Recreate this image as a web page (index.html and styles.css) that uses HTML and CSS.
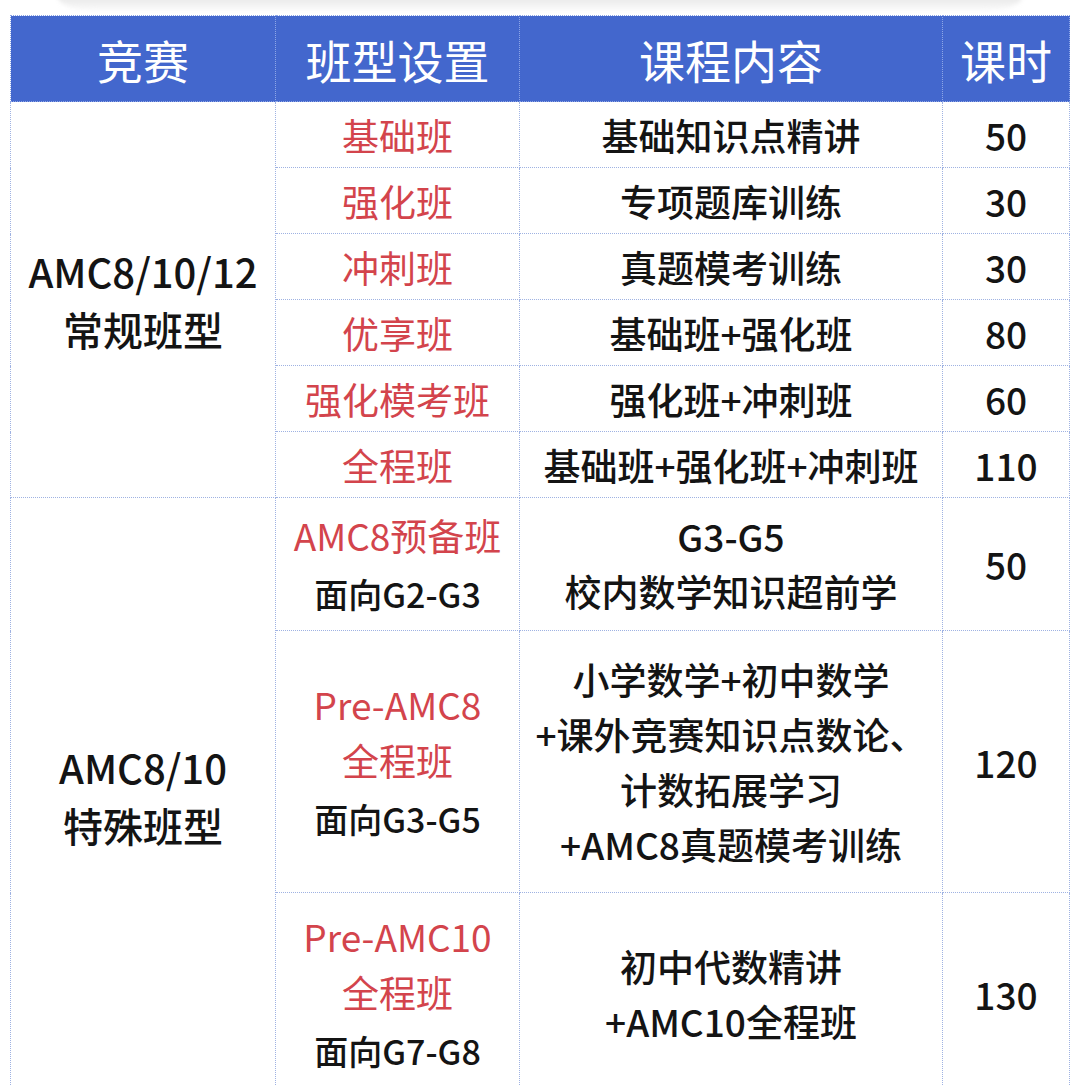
FILE: index.html
```html
<!DOCTYPE html>
<html lang="zh-CN">
<head>
<meta charset="utf-8">
<title>AMC 课程设置</title>
<link rel="stylesheet" href="styles.css">
</head>
<body>
<div class="top-shade"></div>
<table class="course-table">
  <colgroup>
    <col class="c1"><col class="c2"><col class="c3"><col class="c4">
  </colgroup>
  <thead>
    <tr class="head-row">
      <th>竞赛</th>
      <th>班型设置</th>
      <th>课程内容</th>
      <th>课时</th>
    </tr>
  </thead>
  <tbody>
    <tr class="std-row">
      <td rowspan="6" class="comp"><div class="comp-text">AMC8/10/12<br>常规班型</div></td>
      <td class="type"><span class="red">基础班</span></td>
      <td class="content">基础知识点精讲</td>
      <td class="hours">50</td>
    </tr>
    <tr class="std-row">
      <td class="type"><span class="red">强化班</span></td>
      <td class="content">专项题库训练</td>
      <td class="hours">30</td>
    </tr>
    <tr class="std-row">
      <td class="type"><span class="red">冲刺班</span></td>
      <td class="content">真题模考训练</td>
      <td class="hours">30</td>
    </tr>
    <tr class="std-row">
      <td class="type"><span class="red">优享班</span></td>
      <td class="content">基础班+强化班</td>
      <td class="hours">80</td>
    </tr>
    <tr class="std-row">
      <td class="type"><span class="red">强化模考班</span></td>
      <td class="content">强化班+冲刺班</td>
      <td class="hours">60</td>
    </tr>
    <tr class="std-row">
      <td class="type"><span class="red">全程班</span></td>
      <td class="content">基础班+强化班+冲刺班</td>
      <td class="hours">110</td>
    </tr>
    <tr class="row-prep">
      <td rowspan="3" class="comp"><div class="comp-text">AMC8/10<br>特殊班型</div></td>
      <td class="type multi">
        <div class="red">AMC8预备班</div>
        <div class="sub">面向G2-G3</div>
      </td>
      <td class="content multi">G3-G5<br>校内数学知识超前学</td>
      <td class="hours">50</td>
    </tr>
    <tr class="row-pre8">
      <td class="type multi">
        <div class="red">Pre-AMC8<br>全程班</div>
        <div class="sub">面向G3-G5</div>
      </td>
      <td class="content multi">小学数学+初中数学<br>+课外竞赛知识点数论、<br>计数拓展学习<br>+AMC8真题模考训练</td>
      <td class="hours">120</td>
    </tr>
    <tr class="row-pre10">
      <td class="type multi">
        <div class="red">Pre-AMC10<br>全程班</div>
        <div class="sub">面向G7-G8</div>
      </td>
      <td class="content multi">初中代数精讲<br>+AMC10全程班</td>
      <td class="hours">130</td>
    </tr>
  </tbody>
</table>
</body>
</html>
```

FILE: styles.css
```css
html, body {
  margin: 0;
  padding: 0;
  background: #ffffff;
}

body {
  font-family: "Noto Sans CJK SC", "Noto Sans", sans-serif;
  color: #141414;
  height: 1085px;
  overflow: hidden;
}

.top-shade {
  height: 15px;
  margin: -4px 58px 0 58px;
  border-radius: 0 0 40px 40px / 0 0 14px 14px;
  background: linear-gradient(to bottom, #e6e6e6 0%, #f1f1f1 50%, #fcfcfc 100%);
  filter: blur(2px);
}

.course-table {
  margin: 4px 0 0 10px;
  width: 1059px;
  table-layout: fixed;
  border-collapse: collapse;
  font-weight: 500;
}

.c1 { width: 265px; }
.c2 { width: 244px; }
.c3 { width: 423px; }
.c4 { width: 127px; }

.course-table th,
.course-table td {
  border: 1px dotted #9fb2e2;
  padding: 0;
  text-align: center;
  vertical-align: middle;
}

.head-row th {
  background: #4367cd;
  color: #ffffff;
  font-size: 46px;
  font-weight: 400;
  height: 84px;
  line-height: 1;
  border-color: #8ea6e6;
  padding-top: 1px;
}

.std-row td {
  height: 65px;
  font-size: 37px;
  line-height: 40px;
}

.comp-text {
  font-size: 40px;
  line-height: 58px;
}

.type {
  font-size: 37px;
}

.red {
  color: #d3444c;
  font-weight: 400;
}

.content,
.hours {
  font-size: 37px;
}

.multi {
  line-height: 55px;
}

.type.multi .red {
  font-size: 37px;
  line-height: 56px;
}

.sub {
  font-size: 34px;
  line-height: 56px;
  margin-top: 3px;
  color: #141414;
}

.row-prep td {
  height: 132px;
  font-size: 37px;
}

.row-pre8 td {
  height: 261px;
  font-size: 37px;
}

.row-pre10 td {
  height: 201px;
  font-size: 37px;
}
```
